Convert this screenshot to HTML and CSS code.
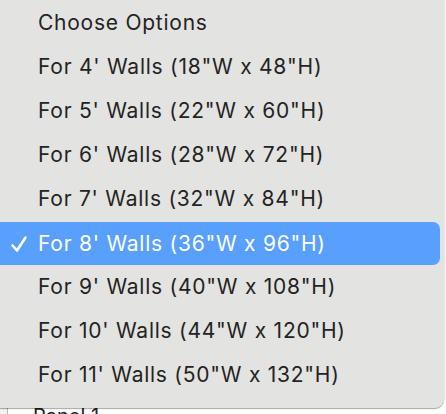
FILE: index.html
```html
<!DOCTYPE html>
<html>
<head>
<meta charset="utf-8">
<link rel="stylesheet" href="styles.css">
</head>
<body>
<div class="page">
  <ul class="menu">
    <li class="item">Choose Options</li>
    <li class="item">For 4' Walls (18"W x 48"H)</li>
    <li class="item">For 5' Walls (22"W x 60"H)</li>
    <li class="item">For 6' Walls (28"W x 72"H)</li>
    <li class="item">For 7' Walls (32"W x 84"H)</li>
    <li class="item selected"><svg class="check" viewBox="0 0 18 18" width="18" height="18"><path d="M2.5 10.5 L7 15.5 L15.5 2.5" fill="none" stroke="#fff" stroke-width="2.6" stroke-linecap="round" stroke-linejoin="round"/></svg>For 8' Walls (36"W x 96"H)</li>
    <li class="item">For 9' Walls (40"W x 108"H)</li>
    <li class="item">For 10' Walls (44"W x 120"H)</li>
    <li class="item">For 11' Walls (50"W x 132"H)</li>
  </ul>
  <div class="select">Panel 1</div>
</div>
</body>
</html>
```
FILE: styles.css
```css
html, body {
  margin: 0;
  padding: 0;
  background: #f2f2f2;
}
.page {
  position: relative;
  width: 446px;
  height: 414px;
  overflow: hidden;
  font-family: Inter, "Liberation Sans", sans-serif;
}
.select {
  position: absolute;
  z-index: 0;
  left: 7px;
  top: 400px;
  width: 439px;
  height: 14px;
  overflow: hidden;
  background: #fff;
  border-left: 1px solid #b8b8b8;
  font-size: 20px;
  line-height: 24px;
  color: #222;
  padding: 4px 0 0 25px;
  box-sizing: border-box;
}
.menu {
  position: relative;
  z-index: 1;
  list-style: none;
  margin: 0;
  padding: 0;
  width: 444px;
  height: 408px;
  background: #e3e3e2;
  border-bottom-right-radius: 9px;
  box-shadow: 0 1px 1px rgba(0,0,0,0.35);
}
.item {
  display: flex;
  align-items: center;
  height: 44px;
  padding-left: 38px;
  font-size: 21px;
  color: #232323;
  letter-spacing: 0.75px;
  position: relative;
}
.item.selected {
  background: #58a0fb;
  color: #fff;
  margin: 2px 4px 0 0;
  height: 43px;
  border-radius: 0 7px 7px 0;
  margin-bottom: -1px;
}
.check {
  position: absolute;
  left: 10px;
  top: 13px;
}
```
